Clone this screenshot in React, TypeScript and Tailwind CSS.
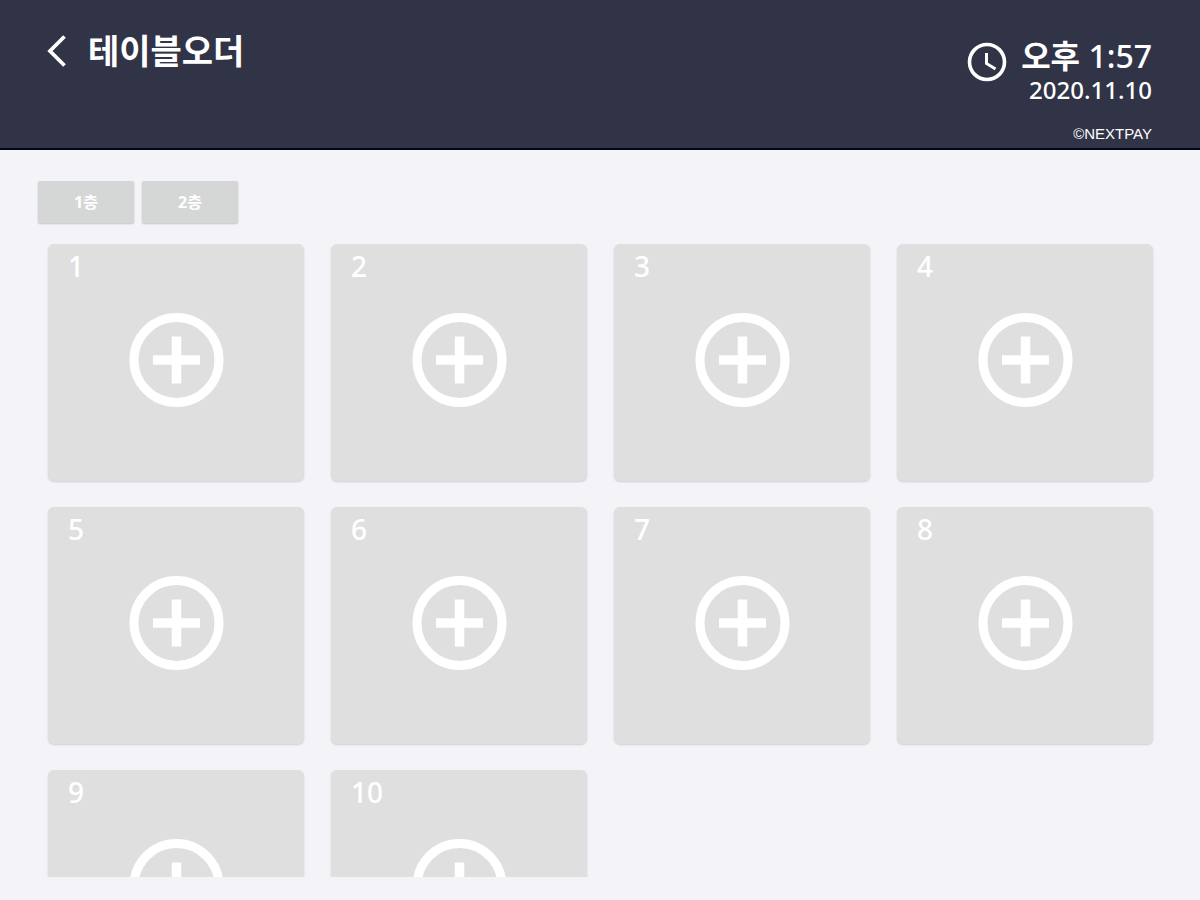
import React, { useState } from 'react';

interface TableCardProps {
  number: number;
}

const FLOORS = ['1층', '2층'];
const TABLES = [1, 2, 3, 4, 5, 6, 7, 8, 9, 10];

const BackIcon = () => (
  <svg width="20" height="32" viewBox="0 0 20 32" fill="none" stroke="currentColor" strokeWidth="3.8" aria-hidden="true">
    <path d="M18.5 1.5 4 16l14.5 14.5" />
  </svg>
);

const ClockIcon = () => (
  <svg width="40" height="40" viewBox="0 0 40 40" fill="none" stroke="currentColor" aria-hidden="true">
    <circle cx="20" cy="20" r="17.5" strokeWidth="3.6" />
    <path d="M19.5 11v10.5l9 5.5" strokeWidth="3" />
  </svg>
);

const PlusCircleIcon = () => (
  <svg width="96" height="96" viewBox="0 0 96 96" fill="none" stroke="currentColor" aria-hidden="true">
    <circle cx="48.5" cy="48" r="42.5" strokeWidth="9" />
    <path d="M48.5 24.5v47M25 48h47" strokeWidth="9.5" />
  </svg>
);

const TableCard: React.FC<TableCardProps> = ({ number }) => (
  <button
    aria-label={`테이블 ${number}`}
    className="flex h-[237px] flex-col items-start rounded-md bg-[#dfdfdf] text-white shadow-[0_1px_2px_rgba(0,0,0,0.15)]"
  >
    <span className="px-5 pt-1 text-[28px] leading-9 font-medium">{number}</span>
    <span className="flex justify-center self-stretch pt-7">
      <PlusCircleIcon />
    </span>
  </button>
);

const App: React.FC = () => {
  const [floor, setFloor] = useState(0);

  return (
    <div className="flex h-screen flex-col bg-[#f3f3f8] pb-[23px] font-['Noto_Sans','Noto_Sans_CJK_KR',sans-serif]">
      <header className="flex shrink-0 items-start justify-between border-b-2 border-[#05061c] bg-[#313347] pr-12 pb-1 pl-[46px] text-white">
        <div className="flex items-center gap-[22px] pt-7">
          <button aria-label="뒤로">
            <BackIcon />
          </button>
          <h1 className="text-[34px] leading-[46px] font-bold">테이블오더</h1>
        </div>

        <div className="flex flex-col items-end pt-9">
          <div className="flex items-start gap-[14px]">
            <span className="pt-[6px]">
              <ClockIcon />
            </span>
            <div className="flex flex-col items-end">
              <time className="text-[32px] leading-10 font-medium">
                <span className="font-bold">오후</span> 1:57
              </time>
              <time className="text-2xl leading-7 font-medium">2020.11.10</time>
            </div>
          </div>
          <small className="pt-5 font-['Liberation_Sans',sans-serif] text-[15px] leading-5">©NEXTPAY</small>
        </div>
      </header>

      <nav className="flex shrink-0 gap-2 pt-[31px] pl-[38px]">
        {FLOORS.map((name, i) => (
          <button
            key={name}
            onClick={() => setFloor(i)}
            aria-pressed={floor === i}
            className="h-[42px] w-24 rounded-xs bg-[#d5d7d7] text-base font-bold text-white shadow-[0_1px_2px_rgba(0,0,0,0.2)]"
          >
            {name}
          </button>
        ))}
      </nav>

      <main className="mt-4 min-h-0 flex-1 overflow-hidden pt-[5px] pr-[47px] pl-12">
        <div className="grid grid-cols-4 gap-x-[27px] gap-y-[26px]">
          {TABLES.map((n) => (
            <TableCard key={n} number={n} />
          ))}
        </div>
      </main>
    </div>
  );
};

export default App;
